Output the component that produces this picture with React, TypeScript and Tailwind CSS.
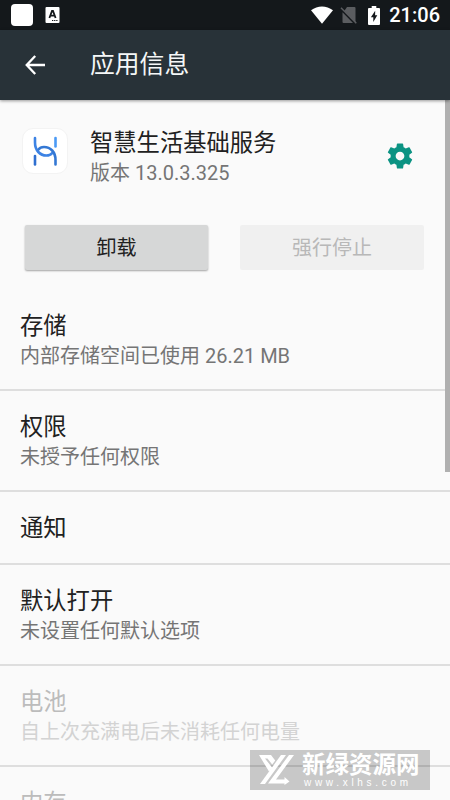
import React from 'react';

interface SettingRow {
  title: string;
  summary?: string;
  disabled?: boolean;
}

const rows: SettingRow[] = [
  { title: '存储', summary: '内部存储空间已使用 26.21 MB' },
  { title: '权限', summary: '未授予任何权限' },
  { title: '通知' },
  { title: '默认打开', summary: '未设置任何默认选项' },
  { title: '电池', summary: '自上次充满电后未消耗任何电量', disabled: true },
  { title: '内存', disabled: true },
];

const StatusBar: React.FC = () => (
  <div className="flex h-[30px] shrink-0 items-center bg-[#14181b] pl-[11px] pr-[10px]">
    <span className="h-[22px] w-[22px] rounded-[4px] bg-white" />
    <svg className="ml-3 h-4 w-[15px]" viewBox="0 0 15 16">
      <rect x="0.5" width="14" height="16" rx="1" fill="#fff" />
      <path d="M4.4 11 7 4h1l2.6 7M5.4 8.7h4.2" fill="none" stroke="#14181b" strokeWidth="1.8" />
      <path d="M7 13.5h6" stroke="#14181b" strokeWidth="1" strokeDasharray="1.3 0.8" />
    </svg>
    <svg className="ml-auto h-[18px] w-[22px]" viewBox="0 0 22 18">
      <path d="M0 4.2C6.6-.9 15.4-.9 22 4.2L11 17.8z" fill="#fff" />
    </svg>
    <svg className="ml-[7px] h-[18px] w-[18px]" viewBox="0 0 18 18">
      <path d="M7 1h7.5q1 0 1 1v14.5L4.3 5zM2.5 6.2 13 17H3.5q-1 0-1-1z" fill="#5b5d60" />
      <path d="M1 1.8 16.3 17.3" stroke="#5b5d60" strokeWidth="1.5" />
    </svg>
    <svg className="ml-[10px] h-[19px] w-3" viewBox="0 0 12 19">
      <path d="M1 2h2.7V0h4.6V2H11q1 0 1 1v15q0 1-1 1H1q-1 0-1-1V3q0-1 1-1z" fill="#fff" />
      <path d="M7.2 4.7 2.9 11.3h2.4v4.8l4-6.8H7.1z" fill="#14181b" />
    </svg>
    <span className="ml-[9px] font-['Roboto',sans-serif] text-[20px] leading-[30px] font-medium text-white">
      21:06
    </span>
  </div>
);

const BackIcon: React.FC = () => (
  <svg className="h-5 w-5" viewBox="0 0 20 20" fill="none" stroke="#fff" strokeWidth="2.3">
    <path d="M10.2 1 1.7 10l8.5 9M1.8 10H20" />
  </svg>
);

const GearIcon: React.FC = () => (
  <svg className="h-[30px] w-[30px]" viewBox="0 0 24 24" fill="#0b9383">
    <path d="M19.43 12.98c.04-.32.07-.64.07-.98s-.03-.66-.07-.98l2.11-1.65c.19-.15.24-.42.12-.64l-2-3.46c-.12-.22-.39-.3-.61-.22l-2.49 1c-.52-.4-1.08-.73-1.69-.98l-.38-2.65C14.46 2.18 14.25 2 14 2h-4c-.25 0-.46.18-.49.42l-.38 2.65c-.61.25-1.17.59-1.69.98l-2.49-1c-.23-.09-.49 0-.61.22l-2 3.46c-.13.22-.07.49.12.64l2.11 1.65c-.04.32-.07.65-.07.98s.03.66.07.98l-2.11 1.65c-.19.15-.24.42-.12.64l2 3.46c.12.22.39.3.61.22l2.49-1c.52.4 1.08.73 1.69.98l.38 2.65c.03.24.24.42.49.42h4c.25 0 .46-.18.49-.42l.38-2.65c.61-.25 1.17-.59 1.69-.98l2.49 1c.23.09.49 0 .61-.22l2-3.46c.12-.22.07-.49-.12-.64l-2.11-1.65zM12 15.5c-1.93 0-3.5-1.57-3.5-3.5s1.57-3.5 3.5-3.5 3.5 1.57 3.5 3.5-1.57 3.5-3.5 3.5z" />
  </svg>
);

const AppIcon: React.FC = () => (
  <div className="h-[46px] w-[46px] rounded-[11px] border border-[#f3f3f3] bg-white">
    <svg className="h-11 w-11" viewBox="0 0 44 44" fill="none" strokeWidth="2.6" strokeLinecap="round">
      <path d="M12 9v4.5c0 8 5 13 11.500 13 2.500 0 4.500-1 5.500-2.300" stroke="#3d83e4" />
      <path d="M32.500 35.500V31c0-8-5-13-11.500-13-2.500 0-4.500 1-5.300 2.300" stroke="#3478d4" />
      <path d="M32.500 9v8.500" stroke="#4b9af5" />
      <path d="M12 27v8.500" stroke="#2f6fd0" />
    </svg>
  </div>
);

const Watermark: React.FC = () => (
  <div className="absolute top-[750px] left-[250px] flex h-10 w-[180px] bg-black/20 text-white">
    <svg className="ml-[9px] mt-[5px] h-[30px] w-9" viewBox="0 0 36 30" fill="#fff">
      <path d="M0 0h12l4.200 5.500-3 4L8.500 3.500H6l7.500 9.500-3.500 3.500z" />
      <path d="M22 0h5L6 29H1z" />
      <path d="M30 0h5L17 24.500h8.500V22l5 4.500-5 3.500v-1.500H9z" />
    </svg>
    <div className="ml-[7px] flex flex-col">
      <span className="mt-[3px] h-[25px] text-[23.500px] leading-[25px] font-bold whitespace-nowrap">新绿资源网</span>
      <span className="ml-[2px] font-['Liberation_Sans',sans-serif] text-[10px] leading-[9px] tracking-[3.700px]">
        www.xlhs.com
      </span>
    </div>
  </div>
);

const Row: React.FC<{ row: SettingRow }> = ({ row }) => (
  <div className="shrink-0 border-b-2 border-[#dedede] pt-5 pb-[19px] pl-5">
    <div className={`text-[23.300px] leading-8 ${row.disabled ? 'text-[#bcbcbc]' : 'text-[#212121]'}`}>
      {row.title}
    </div>
    {row.summary && (
      <div className={`text-[20px] leading-7 ${row.disabled ? 'text-[#d3d3d3]' : 'text-[#757575]'}`}>
        {row.summary}
      </div>
    )}
  </div>
);

export default function App() {
  return (
    <div className="relative flex h-[800px] w-[450px] flex-col overflow-hidden bg-[#fafafa] font-['Roboto','Noto_Sans_CJK_SC',sans-serif]">
      <StatusBar />
      <header className="z-10 flex h-[70px] shrink-0 items-center bg-[#283238] pl-[25px] shadow-[0_1px_3px_rgba(0,0,0,0.4)]">
        <BackIcon />
        <h1 className="ml-[45px] text-[24.800px] leading-9 text-[#f5f7f7]">应用信息</h1>
      </header>

      <main className="flex h-[700px] shrink-0 flex-col">
        <section className="flex h-[125px] shrink-0 pl-[22px] pr-[35px] pt-7">
          <AppIcon />
          <div className="ml-[22px]">
            <div className="text-[23.300px] leading-[30px] text-[#212121]">智慧生活基础服务</div>
            <div className="text-[20px] leading-[30px] text-[#757575]">版本 13.0.3.325</div>
          </div>
          <div className="mt-[13px] ml-auto">
            <GearIcon />
          </div>
        </section>
        <section className="flex h-[65px] shrink-0 gap-8 px-[25px]">
          <button className="h-[45px] w-[183px] rounded-[2px] bg-[#d6d7d7] text-[20px] text-[#212121] shadow-[0_1px_2px_rgba(0,0,0,0.35)]">
            卸载
          </button>
          <button className="h-[45px] w-[184px] rounded-[2px] bg-[#f0f0f0] text-[20px] text-[#b8b8b8]" disabled>
            强行停止
          </button>
        </section>
        {rows.map(row => (
          <Row key={row.title} row={row} />
        ))}
      </main>

      <div className="absolute top-[100px] right-0 h-[372px] w-[5px] bg-[#b0b0b0]" />
      <Watermark />
    </div>
  );
}
